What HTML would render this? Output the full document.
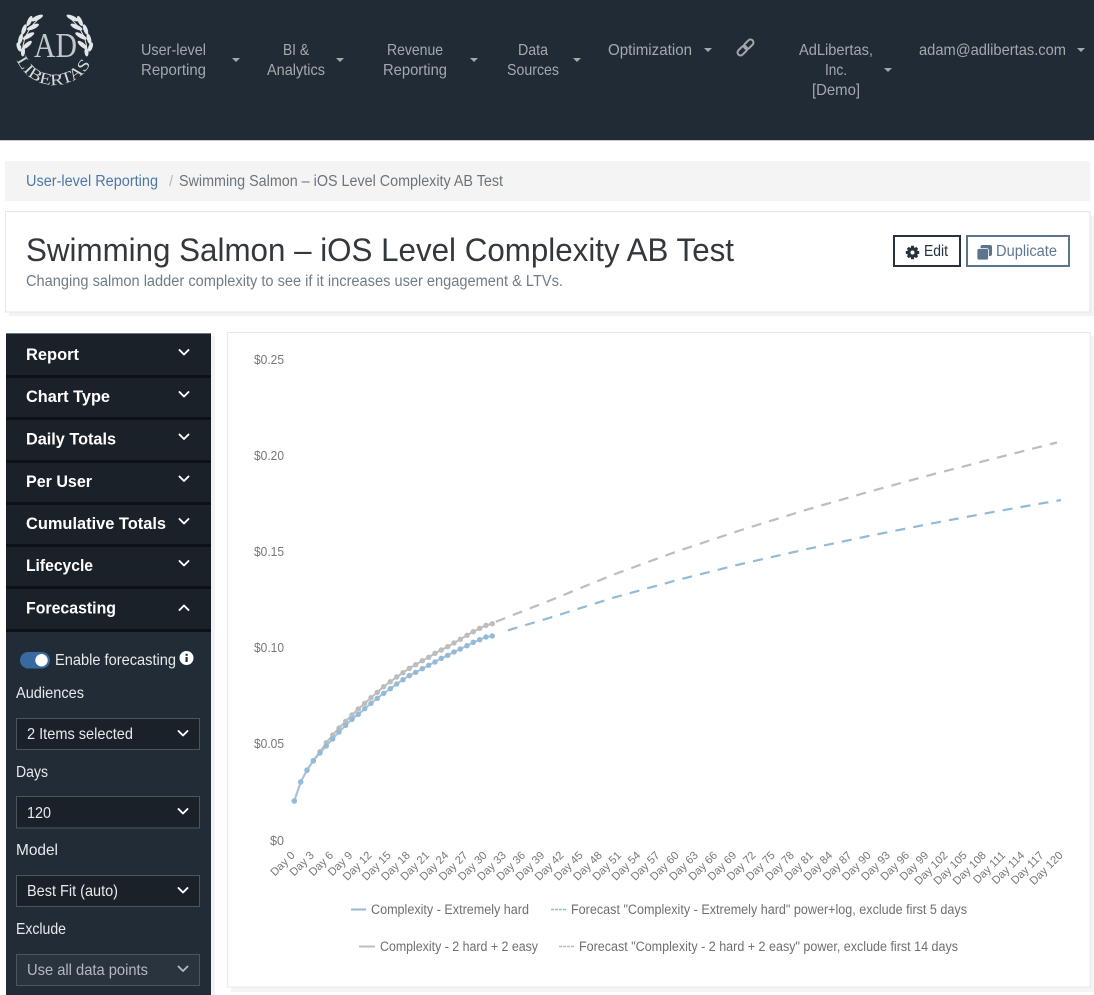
<!DOCTYPE html>
<html lang="en">
<head>
<meta charset="utf-8">
<title>Swimming Salmon – iOS Level Complexity AB Test</title>
<style>
html,body{margin:0;padding:0;background:#fff;width:1094px;height:995px;overflow:hidden}
svg{display:block;font-family:"Liberation Sans",sans-serif}
.n{fill:#a5a9ac;font-size:16px}
.s{fill:#fff;font-size:17px;font-weight:bold}
.w{fill:#e8eaec;font-size:15.600px}
.y{fill:#777;font-size:13.200px}
.l{fill:#6f6f6f;font-size:13.400px}
.x text{fill:#777;font-size:11.200px;text-anchor:end}
.c{fill:none;stroke:#fff;stroke-width:1.9;stroke-linecap:round;stroke-linejoin:round}
</style>
</head>
<body>
<svg width="1094" height="995" viewBox="0 0 1094 995" xmlns="http://www.w3.org/2000/svg">
<rect width="1094" height="995" fill="#fff"/>

<!-- nav -->
<rect width="1094" height="140" fill="#202b35"/>
<rect y="140" width="1094" height="1" fill="#c9cbcd"/>
<g fill="#e4e6e8">
  <g>
    <path d="M23 55C21 42 28 27 42 16" fill="none" stroke="#e4e6e8" stroke-width="1"/>
    <ellipse cx="37" cy="18" rx="6.500" ry="2.200" transform="rotate(-25 37 18)"/>
    <ellipse cx="29.500" cy="21" rx="5.500" ry="2.100" transform="rotate(-65 29.500 21)"/>
    <ellipse cx="33" cy="27" rx="6.500" ry="2.200" transform="rotate(-25 33 27)"/>
    <ellipse cx="24" cy="29.500" rx="5.500" ry="2.100" transform="rotate(-70 24 29.500)"/>
    <ellipse cx="28.500" cy="36" rx="6.500" ry="2.200" transform="rotate(-30 28.500 36)"/>
    <ellipse cx="20.500" cy="39" rx="5.500" ry="2.100" transform="rotate(-75 20.500 39)"/>
    <ellipse cx="27" cy="45" rx="6" ry="2.200" transform="rotate(-40 27 45)"/>
    <ellipse cx="19" cy="47" rx="4.800" ry="2.100" transform="rotate(-110 19 47)"/>
    <ellipse cx="23" cy="52" rx="4.500" ry="2" transform="rotate(-85 23 52)"/>
  </g>
  <g transform="translate(109.500 0) scale(-1 1)">
    <path d="M23 55C21 42 28 27 42 16" fill="none" stroke="#e4e6e8" stroke-width="1"/>
    <ellipse cx="37" cy="18" rx="6.500" ry="2.200" transform="rotate(-25 37 18)"/>
    <ellipse cx="29.500" cy="21" rx="5.500" ry="2.100" transform="rotate(-65 29.500 21)"/>
    <ellipse cx="33" cy="27" rx="6.500" ry="2.200" transform="rotate(-25 33 27)"/>
    <ellipse cx="24" cy="29.500" rx="5.500" ry="2.100" transform="rotate(-70 24 29.500)"/>
    <ellipse cx="28.500" cy="36" rx="6.500" ry="2.200" transform="rotate(-30 28.500 36)"/>
    <ellipse cx="20.500" cy="39" rx="5.500" ry="2.100" transform="rotate(-75 20.500 39)"/>
    <ellipse cx="27" cy="45" rx="6" ry="2.200" transform="rotate(-40 27 45)"/>
    <ellipse cx="19" cy="47" rx="4.800" ry="2.100" transform="rotate(-110 19 47)"/>
    <ellipse cx="23" cy="52" rx="4.500" ry="2" transform="rotate(-85 23 52)"/>
  </g>
</g>
<text x="34" y="57" font-size="35" textLength="43" lengthAdjust="spacingAndGlyphs" style="font-family:'Liberation Serif',serif" fill="#d5d8da" fill-opacity=".9">AD</text>
<path id="arc" d="M16.500 60C25 78 39 84.500 54.500 85C70 84.500 84 77 92 61.500" fill="none"/>
<text font-size="16" fill="#d5d8da" style="font-family:'Liberation Serif',serif"><textPath href="#arc" textLength="92" lengthAdjust="spacingAndGlyphs">LIBERTAS</textPath></text>

<text class="n" x="141" y="55" textLength="65" lengthAdjust="spacingAndGlyphs">User-level</text>
<text class="n" x="141" y="75" textLength="65" lengthAdjust="spacingAndGlyphs">Reporting</text>
<text class="n" x="283" y="55" textLength="26" lengthAdjust="spacingAndGlyphs">BI &amp;</text>
<text class="n" x="267" y="75" textLength="58" lengthAdjust="spacingAndGlyphs">Analytics</text>
<text class="n" x="387" y="55" textLength="56" lengthAdjust="spacingAndGlyphs">Revenue</text>
<text class="n" x="383" y="75" textLength="64" lengthAdjust="spacingAndGlyphs">Reporting</text>
<text class="n" x="518" y="55" textLength="30" lengthAdjust="spacingAndGlyphs">Data</text>
<text class="n" x="507" y="75" textLength="52" lengthAdjust="spacingAndGlyphs">Sources</text>
<text class="n" x="608" y="55" textLength="84" lengthAdjust="spacingAndGlyphs">Optimization</text>
<text class="n" x="799" y="55" textLength="74" lengthAdjust="spacingAndGlyphs">AdLibertas,</text>
<text class="n" x="825" y="75" textLength="22" lengthAdjust="spacingAndGlyphs">Inc.</text>
<text class="n" x="812" y="95" textLength="48" lengthAdjust="spacingAndGlyphs">[Demo]</text>
<text class="n" x="919" y="55" textLength="147" lengthAdjust="spacingAndGlyphs">adam@adlibertas.com</text>
<g fill="#a5a9ac">
  <path d="M232 58h8l-4 4z"/><path d="M336 58h8l-4 4z"/><path d="M470 58h8l-4 4z"/><path d="M573 58h8l-4 4z"/>
  <path d="M704 48h8l-4 4z"/><path d="M884 68h8l-4 4z"/><path d="M1077 48h8l-4 4z"/>
</g>
<g fill="none" stroke="#a5a9ac" stroke-width="2" transform="rotate(-45 745.500 47.500)">
  <rect x="735.500" y="44.500" width="11" height="6" rx="3"/>
  <rect x="744.500" y="44.500" width="11" height="6" rx="3"/>
</g>

<!-- breadcrumb -->
<rect x="5" y="161" width="1085" height="40" fill="#f4f4f4"/>
<text x="26" y="186" font-size="15.500" fill="#4c78a8" textLength="132" lengthAdjust="spacingAndGlyphs">User-level Reporting</text>
<text x="169" y="186" font-size="15" fill="#b5b8bb">/</text>
<text x="179" y="186" font-size="15.500" fill="#6b747c" textLength="324" lengthAdjust="spacingAndGlyphs">Swimming Salmon – iOS Level Complexity AB Test</text>

<!-- header card -->
<rect x="9" y="216" width="1085" height="100" fill="#f3f3f3"/>
<rect x="5.500" y="211.500" width="1084.500" height="100.500" fill="#fff" stroke="#e6e6e6"/>
<text x="26" y="261" font-size="32.500" fill="#33383c" textLength="708" lengthAdjust="spacingAndGlyphs">Swimming Salmon – iOS Level Complexity AB Test</text>
<text x="26" y="286" font-size="15.500" fill="#6f7c88" textLength="537" lengthAdjust="spacingAndGlyphs">Changing salmon ladder complexity to see if it increases user engagement &amp; LTVs.</text>
<rect x="894" y="236" width="66" height="30" fill="#fff" stroke="#27323c" stroke-width="2"/>
<g fill="#27323c">
  <circle cx="912.500" cy="252.500" r="5.300"/>
  <g stroke="#27323c" stroke-width="3">
    <path d="M912.500 245.800v13.400M905.800 252.500h13.400M907.800 247.800l9.400 9.400M917.200 247.800l-9.400 9.400"/>
  </g>
  <circle cx="912.500" cy="252.500" r="2" fill="#fff"/>
</g>
<text x="924" y="256" font-size="15.500" fill="#27323c" textLength="24" lengthAdjust="spacingAndGlyphs">Edit</text>
<rect x="967" y="236" width="102" height="30" fill="#fff" stroke="#5c748c" stroke-width="2"/>
<rect x="980.500" y="245" width="11.500" height="11" rx="2" fill="#5c748c"/>
<rect x="977" y="248.500" width="11.500" height="11.500" rx="2" fill="#5c748c" stroke="#fff" stroke-width=".8"/>
<text x="996" y="256" font-size="15.500" fill="#5f7690" textLength="61" lengthAdjust="spacingAndGlyphs">Duplicate</text>

<!-- sidebar -->
<rect x="211" y="336" width="4" height="659" fill="#f3f3f3"/>
<rect x="6" y="333" width="205" height="662" fill="#212c36"/>
<rect x="6" y="333" width="205" height="299" fill="#1b2128"/>
<rect x="6" y="333" width="205" height="1" fill="#6b7278"/>
<g fill="#0e1216">
  <rect x="6" y="375" width="205" height="3"/>
  <rect x="6" y="417" width="205" height="3"/>
  <rect x="6" y="460" width="205" height="3"/>
  <rect x="6" y="502" width="205" height="3"/>
  <rect x="6" y="544" width="205" height="3"/>
  <rect x="6" y="586" width="205" height="3"/>
  <rect x="6" y="629" width="205" height="3"/>
</g>
<text class="s" x="26" y="360" textLength="53" lengthAdjust="spacingAndGlyphs">Report</text>
<text class="s" x="26" y="402" textLength="84" lengthAdjust="spacingAndGlyphs">Chart Type</text>
<text class="s" x="26" y="444.500" textLength="90" lengthAdjust="spacingAndGlyphs">Daily Totals</text>
<text class="s" x="26" y="487" textLength="66" lengthAdjust="spacingAndGlyphs">Per User</text>
<text class="s" x="26" y="529" textLength="140" lengthAdjust="spacingAndGlyphs">Cumulative Totals</text>
<text class="s" x="26" y="571" textLength="67" lengthAdjust="spacingAndGlyphs">Lifecycle</text>
<text class="s" x="26" y="613.500" textLength="90" lengthAdjust="spacingAndGlyphs">Forecasting</text>
<path class="c" d="M179.500 350l4.500 4.500 4.500-4.500M179.500 392l4.500 4.500 4.500-4.500M179.500 434.500l4.500 4.500 4.500-4.500M179.500 476.500l4.500 4.500 4.500-4.500M179.500 519l4.500 4.500 4.500-4.500M179.500 561l4.500 4.500 4.500-4.500M179.500 610l4.500-4.500 4.500 4.500"/>

<rect x="20" y="652" width="30" height="16.500" rx="8.250" fill="#38699f"/>
<circle cx="41.500" cy="660.200" r="6.200" fill="#fff"/>
<text class="w" x="55" y="665" textLength="121" lengthAdjust="spacingAndGlyphs">Enable forecasting</text>
<circle cx="186.500" cy="658" r="7" fill="#fff"/>
<rect x="185.500" y="657" width="2.200" height="5" fill="#212c36"/>
<rect x="185.500" y="653.800" width="2.200" height="2" fill="#212c36"/>
<text class="w" x="16" y="698" textLength="68" lengthAdjust="spacingAndGlyphs">Audiences</text>
<text class="w" x="16" y="777" textLength="32" lengthAdjust="spacingAndGlyphs">Days</text>
<text class="w" x="16" y="855" textLength="42" lengthAdjust="spacingAndGlyphs">Model</text>
<text class="w" x="16" y="934" textLength="50" lengthAdjust="spacingAndGlyphs">Exclude</text>

<g stroke="#4b555e" fill="#1b2128">
  <rect x="16.500" y="718.500" width="183" height="31"/>
  <rect x="16.500" y="796.500" width="183" height="31.500"/>
  <rect x="16.500" y="875.500" width="183" height="31"/>
  <rect x="16.500" y="954.500" width="183" height="31" fill="#2a343e"/>
</g>
<text class="w" x="27" y="739" textLength="106" lengthAdjust="spacingAndGlyphs">2 Items selected</text>
<text class="w" x="27" y="818" textLength="24" lengthAdjust="spacingAndGlyphs">120</text>
<text class="w" x="27" y="896" textLength="91" lengthAdjust="spacingAndGlyphs">Best Fit (auto)</text>
<text class="w" x="27" y="975" textLength="121" lengthAdjust="spacingAndGlyphs" style="fill:#b4b9bd">Use all data points</text>
<path class="c" d="M178.500 731l4.500 4.500 4.500-4.500M178.500 809l4.500 4.500 4.500-4.500M178.500 888l4.500 4.500 4.500-4.500"/>
<path class="c" style="stroke:#b4b9bd" d="M178.500 966.500l4.500 4.500 4.500-4.500"/>

<!-- chart card -->
<rect x="231" y="336" width="863" height="656" fill="#f4f4f4"/>
<rect x="227.500" y="332.500" width="862.500" height="654.500" fill="#fff" stroke="#e8e8e8"/>

<text class="y" x="254" y="364" textLength="30" lengthAdjust="spacingAndGlyphs">$0.25</text>
<text class="y" x="254" y="460" textLength="30" lengthAdjust="spacingAndGlyphs">$0.20</text>
<text class="y" x="254" y="556" textLength="30" lengthAdjust="spacingAndGlyphs">$0.15</text>
<text class="y" x="254" y="652" textLength="30" lengthAdjust="spacingAndGlyphs">$0.10</text>
<text class="y" x="254" y="748" textLength="30" lengthAdjust="spacingAndGlyphs">$0.05</text>
<text class="y" x="270" y="845" textLength="14" lengthAdjust="spacingAndGlyphs">$0</text>

<!-- series -->
<path fill="none" stroke="#bdbdbd" stroke-width="2" d="M294.300 801L300.700 782 307 770 313.300 760.500 320 751.700 326.300 742.700 332.700 735 339 728 345.700 721.300 352 715 358.300 709 364.700 703.300 371 697.700 377.300 692.300 383.700 686.700 390.300 681.700 396.700 677 403 672.700 409.300 668.300 415.700 664.700 422.300 660.700 428.700 657.300 435 653.300 441.300 650 447.700 646.700 454 643 460.300 639.300 467 635.300 473.300 631.700 479.700 628.300 486 625.300 492.300 623.700"/>
<g fill="#bdbdbd">
<circle cx="294.300" cy="801" r="2.700"/><circle cx="300.700" cy="782" r="2.700"/><circle cx="307" cy="770" r="2.700"/><circle cx="313.300" cy="760.500" r="2.700"/><circle cx="320" cy="751.700" r="2.700"/><circle cx="326.300" cy="742.700" r="2.700"/><circle cx="332.700" cy="735" r="2.700"/><circle cx="339" cy="728" r="2.700"/><circle cx="345.700" cy="721.300" r="2.700"/><circle cx="352" cy="715" r="2.700"/><circle cx="358.300" cy="709" r="2.700"/><circle cx="364.700" cy="703.300" r="2.700"/><circle cx="371" cy="697.700" r="2.700"/><circle cx="377.300" cy="692.300" r="2.700"/><circle cx="383.700" cy="686.700" r="2.700"/><circle cx="390.300" cy="681.700" r="2.700"/><circle cx="396.700" cy="677" r="2.700"/><circle cx="403" cy="672.700" r="2.700"/><circle cx="409.300" cy="668.300" r="2.700"/><circle cx="415.700" cy="664.700" r="2.700"/><circle cx="422.300" cy="660.700" r="2.700"/><circle cx="428.700" cy="657.300" r="2.700"/><circle cx="435" cy="653.300" r="2.700"/><circle cx="441.300" cy="650" r="2.700"/><circle cx="447.700" cy="646.700" r="2.700"/><circle cx="454" cy="643" r="2.700"/><circle cx="460.300" cy="639.300" r="2.700"/><circle cx="467" cy="635.300" r="2.700"/><circle cx="473.300" cy="631.700" r="2.700"/><circle cx="479.700" cy="628.300" r="2.700"/><circle cx="486" cy="625.300" r="2.700"/><circle cx="492.300" cy="623.700" r="2.700"/>
</g>
<path fill="none" stroke="#a3c4dc" stroke-width="2" d="M294.300 801L300.700 782 307 770.300 313.300 761 320 753 326.300 746 332.700 739 339 732 345.700 725.300 352 719.300 358.300 714.300 364.700 708.700 371 703.300 377.300 698.300 383.700 693.300 390.300 688.700 396.700 684 403 679.700 409.300 675.700 415.700 672.300 422.300 668.700 428.700 665.300 435 662 441.300 658.300 447.700 655.300 454 652 460.300 649 467 645.700 473.300 642.300 479.700 639.700 486 637 492.300 636"/>
<g fill="#93bad6">
<circle cx="294.300" cy="801" r="2.700"/><circle cx="300.700" cy="782" r="2.700"/><circle cx="307" cy="770.300" r="2.700"/><circle cx="313.300" cy="761" r="2.700"/><circle cx="320" cy="753" r="2.700"/><circle cx="326.300" cy="746" r="2.700"/><circle cx="332.700" cy="739" r="2.700"/><circle cx="339" cy="732" r="2.700"/><circle cx="345.700" cy="725.300" r="2.700"/><circle cx="352" cy="719.300" r="2.700"/><circle cx="358.300" cy="714.300" r="2.700"/><circle cx="364.700" cy="708.700" r="2.700"/><circle cx="371" cy="703.300" r="2.700"/><circle cx="377.300" cy="698.300" r="2.700"/><circle cx="383.700" cy="693.300" r="2.700"/><circle cx="390.300" cy="688.700" r="2.700"/><circle cx="396.700" cy="684" r="2.700"/><circle cx="403" cy="679.700" r="2.700"/><circle cx="409.300" cy="675.700" r="2.700"/><circle cx="415.700" cy="672.300" r="2.700"/><circle cx="422.300" cy="668.700" r="2.700"/><circle cx="428.700" cy="665.300" r="2.700"/><circle cx="435" cy="662" r="2.700"/><circle cx="441.300" cy="658.300" r="2.700"/><circle cx="447.700" cy="655.300" r="2.700"/><circle cx="454" cy="652" r="2.700"/><circle cx="460.300" cy="649" r="2.700"/><circle cx="467" cy="645.700" r="2.700"/><circle cx="473.300" cy="642.300" r="2.700"/><circle cx="479.700" cy="639.700" r="2.700"/><circle cx="486" cy="637" r="2.700"/><circle cx="492.300" cy="636" r="2.700"/>
</g>
<path fill="none" stroke="#bdbdbd" stroke-width="2.200" stroke-dasharray="10 8.200" stroke-dashoffset="-2" d="M494 622.500L550 600.500 613.750 574.500 677.500 551.200 741.250 530 805 510.200 868.750 491.800 932.500 474.400 996.250 458 1057 442.500"/>
<path fill="none" stroke="#93bad6" stroke-width="2.200" stroke-dasharray="10 8.200" stroke-dashoffset="-4" d="M504 631.500L550 617.700 613.750 597.600 677.500 580 741.250 564 805 549.500 868.750 536 932.500 523.300 996.250 511.400 1061 500"/>

<!-- x labels -->
<g class="x">
<text transform="translate(295.500 856) rotate(-45)">Day 0</text>
<text transform="translate(314.700 856) rotate(-45)">Day 3</text>
<text transform="translate(333.900 856) rotate(-45)">Day 6</text>
<text transform="translate(353.100 856) rotate(-45)">Day 9</text>
<text transform="translate(372.300 856) rotate(-45)">Day 12</text>
<text transform="translate(391.500 856) rotate(-45)">Day 15</text>
<text transform="translate(410.700 856) rotate(-45)">Day 18</text>
<text transform="translate(429.900 856) rotate(-45)">Day 21</text>
<text transform="translate(449.100 856) rotate(-45)">Day 24</text>
<text transform="translate(468.300 856) rotate(-45)">Day 27</text>
<text transform="translate(487.500 856) rotate(-45)">Day 30</text>
<text transform="translate(506.700 856) rotate(-45)">Day 33</text>
<text transform="translate(525.900 856) rotate(-45)">Day 36</text>
<text transform="translate(545.100 856) rotate(-45)">Day 39</text>
<text transform="translate(564.300 856) rotate(-45)">Day 42</text>
<text transform="translate(583.500 856) rotate(-45)">Day 45</text>
<text transform="translate(602.700 856) rotate(-45)">Day 48</text>
<text transform="translate(621.900 856) rotate(-45)">Day 51</text>
<text transform="translate(641.100 856) rotate(-45)">Day 54</text>
<text transform="translate(660.300 856) rotate(-45)">Day 57</text>
<text transform="translate(679.500 856) rotate(-45)">Day 60</text>
<text transform="translate(698.700 856) rotate(-45)">Day 63</text>
<text transform="translate(717.900 856) rotate(-45)">Day 66</text>
<text transform="translate(737.100 856) rotate(-45)">Day 69</text>
<text transform="translate(756.300 856) rotate(-45)">Day 72</text>
<text transform="translate(775.500 856) rotate(-45)">Day 75</text>
<text transform="translate(794.700 856) rotate(-45)">Day 78</text>
<text transform="translate(813.900 856) rotate(-45)">Day 81</text>
<text transform="translate(833.100 856) rotate(-45)">Day 84</text>
<text transform="translate(852.300 856) rotate(-45)">Day 87</text>
<text transform="translate(871.500 856) rotate(-45)">Day 90</text>
<text transform="translate(890.700 856) rotate(-45)">Day 93</text>
<text transform="translate(909.900 856) rotate(-45)">Day 96</text>
<text transform="translate(929.100 856) rotate(-45)">Day 99</text>
<text transform="translate(948.300 856) rotate(-45)">Day 102</text>
<text transform="translate(967.500 856) rotate(-45)">Day 105</text>
<text transform="translate(986.700 856) rotate(-45)">Day 108</text>
<text transform="translate(1005.900 856) rotate(-45)">Day 111</text>
<text transform="translate(1025.100 856) rotate(-45)">Day 114</text>
<text transform="translate(1044.300 856) rotate(-45)">Day 117</text>
<text transform="translate(1063.500 856) rotate(-45)">Day 120</text>
</g>

<!-- legend -->
<path d="M351 909.500h15" stroke="#93bad6" stroke-width="2"/>
<text class="l" x="371" y="914" textLength="158" lengthAdjust="spacingAndGlyphs">Complexity - Extremely hard</text>
<path d="M551 909.500h15" stroke="#93bad6" stroke-width="1.500" stroke-dasharray="3 1"/>
<text class="l" x="571" y="914" textLength="396" lengthAdjust="spacingAndGlyphs">Forecast "Complexity - Extremely hard" power+log, exclude first 5 days</text>
<path d="M359 946.500h16" stroke="#bdbdbd" stroke-width="2"/>
<text class="l" x="380" y="951" textLength="158" lengthAdjust="spacingAndGlyphs">Complexity - 2 hard + 2 easy</text>
<path d="M559 946.500h15" stroke="#bdbdbd" stroke-width="1.500" stroke-dasharray="3 1"/>
<text class="l" x="579" y="951" textLength="379" lengthAdjust="spacingAndGlyphs">Forecast "Complexity - 2 hard + 2 easy" power, exclude first 14 days</text>
</svg>
</body>
</html>
